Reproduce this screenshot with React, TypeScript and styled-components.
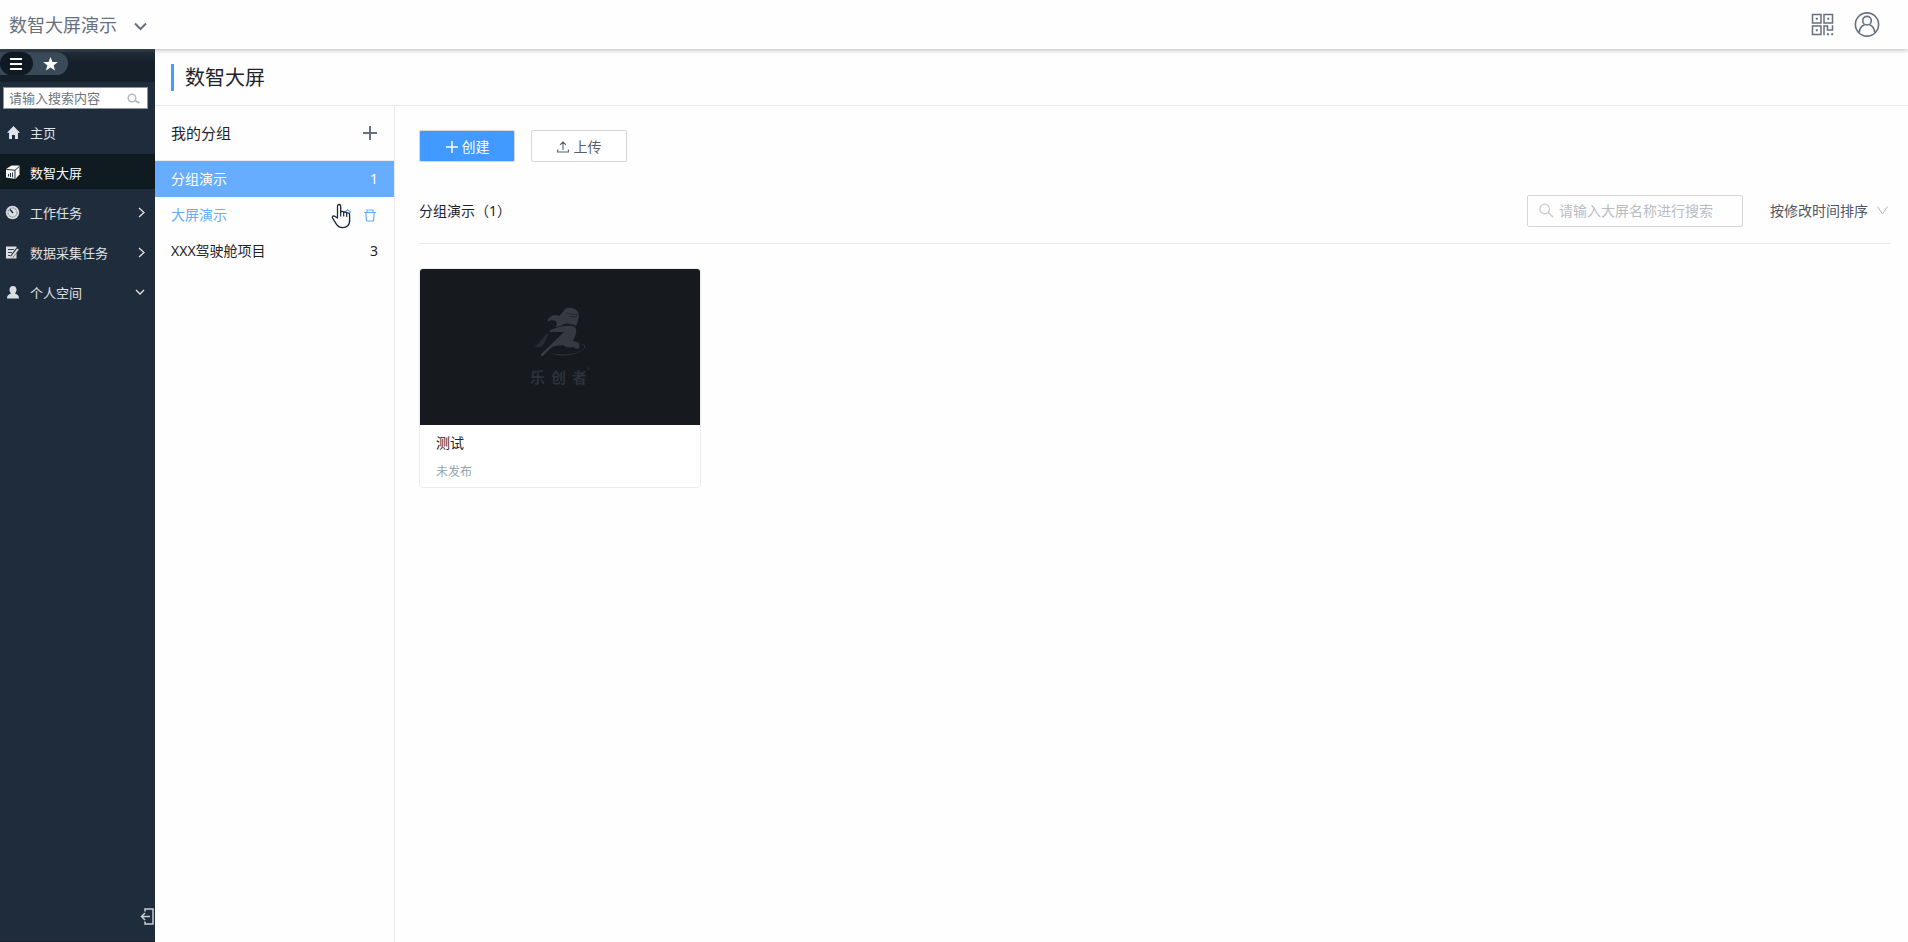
import React from "react";
import styled, { createGlobalStyle } from "styled-components";

const GlobalStyle = createGlobalStyle`
  *, *::before, *::after { box-sizing: border-box; }
  body {
    margin: 0;
    background: #fefefe;
    color: #1f2329;
    font-family: "Noto Sans", "Noto Sans CJK SC", sans-serif;
    font-size: 14px;
    line-height: 20px;
  }
  button, input, select { font: inherit; color: inherit; margin: 0; }
  button { background: none; border: 0; padding: 0; cursor: pointer; }
  h1, h2, h3, p, ul { margin: 0; padding: 0; font-weight: 400; }
  ul { list-style: none; }
  a { color: inherit; text-decoration: none; }
  svg { display: block; flex: none; }
`;

const Page = styled.div`
  display: flex;
  flex-direction: column;
  min-height: 100vh;
`;

const Header = styled.header`
  position: relative;
  z-index: 1;
  display: flex;
  align-items: center;
  justify-content: space-between;
  height: 49px;
  padding: 0 28px 0 9px;
  color: #66707f;
  box-shadow: 0 1px 5px rgba(0, 0, 0, 0.28);
  background: #fefefe;
`;

const AppSwitcher = styled.button`
  display: flex;
  align-items: center;
  gap: 17px;
  font-size: 18px;
  line-height: 24px;

  svg { margin-top: 3px; }
`;

const HeaderTools = styled.div`
  display: flex;
  align-items: center;
  gap: 20px;
`;

const Body = styled.div`
  display: flex;
  flex: 1;
`;

const Sidebar = styled.aside`
  display: flex;
  flex-direction: column;
  width: 155px;
  flex: none;
  background: #1e2c3c;
  border-bottom: 1px solid #17202c;
  color: #e6e8ea;
`;

const SidebarTop = styled.div`
  height: 33px;
  padding-top: 3px;
  background: linear-gradient(#41505c, #1f2c37 4px, #15202b 14px);
`;

const ModeSwitch = styled.div`
  display: flex;
  width: 68px;
  height: 23px;
  background: #3a4a58;
  border-radius: 0 12px 12px 0;
`;

const ModeButton = styled.button<{ $active?: boolean }>`
  display: flex;
  align-items: center;
  justify-content: center;
  width: ${(p) => (p.$active ? 33 : 35)}px;
  height: 23px;
  padding-right: ${(p) => (p.$active ? 2 : 0)}px;
  color: #fff;
  border-radius: 12px;
  background: ${(p) => (p.$active ? "#101a24" : "transparent")};
`;

const MenuSearch = styled.label`
  display: flex;
  align-items: center;
  height: 22px;
  margin: 5px 7px 5px 3px;
  padding: 0 7px 0 5px;
  background: #fff;
  border: 1px solid #8d949b;
  color: #b4b8c2;
`;

const BareInput = styled.input<{ $hint: string }>`
  flex: 1;
  min-width: 0;
  padding: 0;
  border: 0;
  outline: 0;
  background: transparent;
  color: #333;
  &::placeholder { color: ${(p) => p.$hint}; opacity: 1; }
`;

const MenuInput = styled(BareInput)`
  font-size: 13px;
  line-height: 20px;
`;

const Menu = styled.ul`
  display: flex;
  flex-direction: column;
  gap: 5px;
`;

const MenuLink = styled.a<{ $active?: boolean }>`
  display: flex;
  align-items: center;
  gap: 10px;
  height: 35px;
  padding: 2px 10px 0 5px;
  font-size: 13px;
  color: ${(p) => (p.$active ? "#fff" : "#e0e3e6")};
  background: ${(p) => (p.$active ? "#101a21" : "transparent")};
`;

const MenuText = styled.span`
  flex: 1;
  white-space: nowrap;
`;

const Collapse = styled.button`
  align-self: flex-end;
  margin: auto 0 16px;
  color: #c8ccd2;
`;

const Workspace = styled.div`
  display: flex;
  flex-direction: column;
  flex: 1;
  min-width: 0;
`;

const TitleBar = styled.div`
  display: flex;
  align-items: center;
  gap: 11px;
  height: 57px;
  padding: 0 16px;
  border-bottom: 1px solid #e9eaec;
  &::before { content: ""; width: 3px; height: 27px; background: #409eff; }
`;

const Title = styled.h1`
  padding-top: 2px;
  font-size: 20px;
  line-height: 28px;
`;

const Columns = styled.div`
  display: flex;
  flex: 1;
`;

const GroupPanel = styled.nav`
  width: 240px;
  flex: none;
  border-right: 1px solid #e9eaec;
`;

const GroupHeader = styled.div`
  display: flex;
  align-items: center;
  justify-content: space-between;
  height: 55px;
  padding: 0 17px 0 16px;
  border-bottom: 1px solid #e9eaec;
  color: #66707f;
`;

const GroupHeading = styled.h2`
  font-size: 15px;
  color: #1f2329;
`;

const GroupRow = styled.li<{ $tone?: "active" | "hover" }>`
  display: flex;
  align-items: center;
  justify-content: space-between;
  height: 36px;
  padding: 0 16px;
  background: ${(p) => (p.$tone === "active" ? "#66adff" : "transparent")};
  color: ${(p) =>
    p.$tone === "active" ? "#fff" : p.$tone === "hover" ? "#66adff" : "#1f2329"};
`;

const RowTools = styled.div`
  position: relative;
  display: flex;
  align-items: center;
  gap: 13px;
  padding-right: 2px;
`;

const Pointer = styled.svg`
  position: absolute;
  left: -7px;
  top: -5px;
  pointer-events: none;
`;

const Main = styled.main`
  flex: 1;
  min-width: 0;
  padding: 24px 17px 24px 24px;
`;

const Actions = styled.div`
  display: flex;
  align-items: center;
  gap: 16px;
  height: 32px;
`;

const ActionButton = styled.button<{ $primary?: boolean }>`
  display: flex;
  align-items: center;
  justify-content: center;
  gap: ${(p) => (p.$primary ? 3 : 5)}px;
  width: 96px;
  height: 32px;
  padding-top: 1px;
  border: 1px solid #d4d6da;
  border-radius: 2px;
  background: ${(p) => (p.$primary ? "#409aff" : "#fff")};
  color: ${(p) => (p.$primary ? "#fff" : "#595f69")};
`;

const ListBar = styled.div`
  display: flex;
  align-items: center;
  gap: 27px;
  height: 82px;
  padding-top: 16px;
  border-bottom: 1px solid #e9eaec;
`;

const ListHeading = styled.h2`
  flex: 1;
  font-size: 14px;
`;

const BoardSearch = styled.label`
  display: flex;
  align-items: center;
  gap: 5px;
  width: 216px;
  height: 32px;
  padding: 0 11px;
  border: 1px solid #d4d6da;
  border-radius: 2px;
  color: #c5c8ce;
`;

const SortBox = styled.label`
  display: flex;
  align-items: center;
  gap: 9px;
  padding-right: 3px;
  color: #b4b8bf;
`;

const SortSelect = styled.select`
  appearance: none;
  width: 98px;
  padding: 0;
  border: 0;
  background: transparent;
  color: #505762;
`;

const Cards = styled.div`
  display: flex;
  flex-wrap: wrap;
  gap: 24px;
  padding-top: 24px;
`;

const Card = styled.article`
  width: 282px;
  border: 1px solid #ebecef;
  border-radius: 4px;
  overflow: hidden;
  background: #fff;
`;

const Cover = styled.div`
  display: flex;
  flex-direction: column;
  align-items: center;
  gap: 11px;
  height: 156px;
  padding-top: 38px;
  background: #16191d;
  color: #363940;
`;

const Brand = styled.div`
  display: flex;
  gap: 6px;
  font-family: "Noto Sans CJK SC", sans-serif;
  font-size: 15px;
  font-weight: 700;
  line-height: 18px;
  color: #2b3239;
`;

const Registered = styled.sup`
  margin-left: -6px;
  font-size: 6px;
  line-height: 6px;
`;

const CardInfo = styled.div`
  display: flex;
  flex-direction: column;
  gap: 9px;
  padding: 8px 16px 5px;
`;

const CardStatus = styled.p`
  font-size: 12px;
  color: #94a3b0;
`;

const CardTitle = styled.h3`
  font-size: 14px;
`;

type StrokeProps = { w: number; h: number; d: string; sw?: number };
const Line = ({ w, h, d, sw = 1 }: StrokeProps) => (
  <svg width={w} height={h} viewBox={`0 0 ${w} ${h}`} fill="none" stroke="currentColor" strokeWidth={sw} aria-hidden="true">
    <path d={d} />
  </svg>
);

const QrIcon = () => (
  <svg width="23" height="23" viewBox="0 0 23 23" fill="none" stroke="currentColor" strokeWidth="1.5" aria-hidden="true">
    <path d="M1.500 1.500h8.500v8.500H1.500zM13 1.500h8.500v8.500H13zM1.500 13h8.500v8.500H1.500zM13 22.300v-9.300h3.500v4h5v-4.700" />
    <path d="M4.800 5.800h2M16.300 5.800h2M4.800 17.300h2M16 21.300h2M20.200 21.300h2" strokeWidth="2" />
  </svg>
);

const UserIcon = () => (
  <svg width="26" height="26" viewBox="0 0 26 26" fill="none" stroke="currentColor" strokeWidth="1.6" aria-hidden="true">
    <circle cx="13" cy="12.500" r="11.600" />
    <circle cx="13" cy="8.700" r="4.300" />
    <path d="M5.200 20.700c.3-4 2.300-6.700 5.300-7.900M20.800 20.700c-.3-4-2.300-6.700-5.300-7.900" />
  </svg>
);

const HomeIcon = () => (
  <svg width="15" height="15" viewBox="0 0 15 15" fill="currentColor" aria-hidden="true">
    <path d="M8.500 1 15 7.800h-2V14h-3v-4H7v4H4V7.800H2z" />
  </svg>
);

const CubeIcon = () => (
  <svg width="15" height="15" viewBox="0 0 15 15" aria-hidden="true">
    <path d="M1 4 6.500.5h8v9L10.500 14 1 12.500z" fill="#f5f5f5" />
    <path d="M1 4.300l9 1 4.500-4M10 5.300V14M3.500 11.500v-2.500M5.500 12V8M7.600 12.400V7.500" stroke="#26323c" strokeWidth="1" fill="none" />
  </svg>
);

const ClockIcon = () => (
  <svg width="15" height="15" viewBox="0 0 15 15" aria-hidden="true">
    <circle cx="7.500" cy="7.500" r="6.700" fill="#dcdfe2" />
    <circle cx="7.500" cy="7.500" r="4.600" fill="none" stroke="#4a5662" strokeWidth=".8" strokeDasharray="2 1" />
    <path d="M5 4.500 8 8" stroke="#1e2c3c" strokeWidth="1.500" />
  </svg>
);

const FormIcon = () => (
  <svg width="15" height="15" viewBox="0 0 15 15" aria-hidden="true">
    <path d="M1 1.500h10.500v12H1z" fill="#dcdfe2" />
    <path d="M3 4.500h6M3 7.500h4M3 10.500h2" stroke="#34414f" />
    <path d="m6.500 12 6-8" stroke="#1e2c3c" strokeWidth="3.400" />
    <path d="m6.500 12.500 6.500-8.500" stroke="#dcdfe2" strokeWidth="2" />
  </svg>
);

const PersonIcon = () => (
  <svg width="15" height="15" viewBox="0 0 15 15" fill="#dcdfe2" aria-hidden="true">
    <path d="M8 1c2.200 0 3.500 1.500 3.500 3.600 0 1.600-.6 2.900-1.500 3.800 2.500.9 4 2 4 5.100H2c0-3.100 1.500-4.200 4-5.100-.9-.9-1.500-2.200-1.500-3.800C4.500 2.500 5.800 1 8 1z" />
  </svg>
);

const HandPointer = () => (
  <Pointer width="21" height="26" viewBox="0 0 21 26" aria-hidden="true">
    <path
      d="M6.500 15V3.200C6.500.9 9.700.9 9.700 3.200v6c.3-1.300 2.900-1 3 .5.600-1.200 2.800-.9 3 .7.800-1 2.900-.5 2.900 1.300v5.500c0 4.500-2.600 7.400-7 7.400-3.400 0-5.100-1.500-6.700-4.200l-3.300-5.200c-1-1.900 1.200-3 2.500-1.700z"
      fill="#fff" stroke="#1c2533" strokeWidth="1.300" strokeLinejoin="round"
    />
    <path d="M9.700 9v4.500M12.700 10v3.500M15.700 11v3" stroke="#1c2533" strokeWidth="1.200" />
  </Pointer>
);

const RunnerLogo = () => (
  <svg width="54" height="50" viewBox="0 0 54 50" fill="currentColor" aria-hidden="true">
    <path d="M30 5c1-4 5-5 9-4 5 1 7 4 7 8-1 3-1 7-3 10-2-1-4-2-7-2-3-1-6 0-8 2l-6 1c2-2 2-3 1-6-3-1-6-1-9 1 1-4 4-7 9-7l3 1 4-4z" />
    <path d="M17 23c8-3 15-5 22-4 4 1 5 4 4 7-1 4-2 6-3 8l4 1c3 1 3 3 2 6-2 2-4 0-6-1-5 1-8 0-10-2-4 1-8 0-12 3l-8 8c-2 0-3-2-1-3L29 27l2-2-14 0z" />
    <path d="M1 39c4-1 5-4 8-7l7-8c-2 7-4 13-8 16-3 1-5 0-7-1z" opacity=".55" />
    <path d="M18 46c13 3 27 1 32-4 2-2 1-4-2-5 7 0 4 6-2 8-8 4-19 5-28 1z" opacity=".8" />
    <path d="M34 6c4 1 8 2 12 1M36 9c4 1 6 1 9 0" stroke="#202329" strokeWidth=".7" fill="none" />
  </svg>
);

const RIGHT = { w: 7, h: 11, d: "M1 1l5 4.500-5 4.500" };
const DOWN = { w: 10, h: 7, d: "M1 1l4 4 4-4" };

const menuItems = [
  { label: "主页", icon: <HomeIcon /> },
  { label: "数智大屏", icon: <CubeIcon />, active: true },
  { label: "工作任务", icon: <ClockIcon />, arrow: RIGHT },
  { label: "数据采集任务", icon: <FormIcon />, arrow: RIGHT },
  { label: "个人空间", icon: <PersonIcon />, arrow: DOWN },
];

export default function App() {
  return (
    <Page>
      <GlobalStyle />
      <Header>
        <AppSwitcher type="button">
          数智大屏演示
          <Line w={13} h={9} sw={2} d="M1 1.500l5.500 5.500L12 1.500" />
        </AppSwitcher>
        <HeaderTools>
          <button type="button" aria-label="二维码"><QrIcon /></button>
          <button type="button" aria-label="用户"><UserIcon /></button>
        </HeaderTools>
      </Header>
      <Body>
        <Sidebar>
          <SidebarTop>
            <ModeSwitch>
              <ModeButton $active type="button" aria-label="菜单">
                <Line w={12} h={12} sw={2} d="M0 1h12M0 6h12M0 11h12" />
              </ModeButton>
              <ModeButton type="button" aria-label="收藏">
                <svg width="15" height="14" viewBox="0 0 15 14" fill="currentColor" aria-hidden="true">
                  <path d="m7.500 0 1.900 4.900 5.400.2-4.200 3.300 1.500 5.100-4.600-2.900-4.600 2.900 1.500-5.100L.2 5.100l5.400-.2z" />
                </svg>
              </ModeButton>
            </ModeSwitch>
          </SidebarTop>
          <MenuSearch>
            <MenuInput $hint="#70757b" type="text" placeholder="请输入搜索内容" aria-label="请输入搜索内容" />
            <svg width="13" height="11" viewBox="0 0 13 11" fill="none" stroke="currentColor" aria-hidden="true">
              <circle cx="5" cy="5" r="3.800" strokeWidth="1.500" />
              <path d="m8 7.500 4.500 2.500" strokeWidth="2" />
            </svg>
          </MenuSearch>
          <Menu>
            {menuItems.map((m) => (
              <li key={m.label}>
                <MenuLink href="#" $active={m.active}>
                  {m.icon}
                  <MenuText>{m.label}</MenuText>
                  {m.arrow && <Line {...m.arrow} sw={1.3} />}
                </MenuLink>
              </li>
            ))}
          </Menu>
          <Collapse type="button" aria-label="收起">
            <Line w={15} h={17} sw={1.5} d="M5 3.500V1h8v15H5v-2.500M10 8.500H1M5 5 1.500 8.500 5 12" />
          </Collapse>
        </Sidebar>
        <Workspace>
          <TitleBar><Title>数智大屏</Title></TitleBar>
          <Columns>
            <GroupPanel>
              <GroupHeader>
                <GroupHeading>我的分组</GroupHeading>
                <button type="button" aria-label="新建分组">
                  <Line w={14} h={14} sw={2} d="M7 0v14M0 7h14" />
                </button>
              </GroupHeader>
              <ul>
                <GroupRow $tone="active"><span>分组演示</span><span>1</span></GroupRow>
                <GroupRow $tone="hover">
                  <span>大屏演示</span>
                  <RowTools>
                    <button type="button" aria-label="编辑">
                      <Line w={13} h={14} sw={1.2} d="M2 10l7.500-8.500L12.500 4l-7.500 8H2zM8 13h5" />
                    </button>
                    <button type="button" aria-label="删除">
                      <Line w={12} h={13} sw={1.2} d="M0 3.500h12M3 3.500V1h6v2.500M1.800 3.500 2.500 12h7l.7-8.500" />
                    </button>
                    <HandPointer />
                  </RowTools>
                </GroupRow>
                <GroupRow><span>XXX驾驶舱项目</span><span>3</span></GroupRow>
              </ul>
            </GroupPanel>
            <Main>
              <Actions>
                <ActionButton $primary type="button">
                  <Line w={14} h={14} sw={1.5} d="M7 1v12M1 7h12" />创建
                </ActionButton>
                <ActionButton type="button">
                  <Line w={12} h={12} sw={1.1} d="M6 9V1M3 3.800 6 1l3 2.800M.6 8.500V11h10.800V8.500" />上传
                </ActionButton>
              </Actions>
              <ListBar>
                <ListHeading>分组演示（1）</ListHeading>
                <BoardSearch>
                  <Line w={15} h={15} sw={1.2} d="M10.500 6a4.800 4.800 0 1 1-9.600 0 4.800 4.800 0 0 1 9.600 0zM9.200 9.500l5 4.700" />
                  <BareInput $hint="#b9bcc2" type="text" placeholder="请输入大屏名称进行搜索" aria-label="请输入大屏名称进行搜索" />
                </BoardSearch>
                <SortBox>
                  <SortSelect aria-label="排序方式"><option>按修改时间排序</option></SortSelect>
                  <Line w={11} h={9} d="M.5.500l5 7.500 5-7.500" />
                </SortBox>
              </ListBar>
              <Cards>
                <Card>
                  <Cover>
                    <RunnerLogo />
                    <Brand>
                      <span>乐</span><span>创</span><span>者</span><Registered>®</Registered>
                    </Brand>
                  </Cover>
                  <CardInfo>
                    <CardTitle>测试</CardTitle>
                    <CardStatus>未发布</CardStatus>
                  </CardInfo>
                </Card>
              </Cards>
            </Main>
          </Columns>
        </Workspace>
      </Body>
    </Page>
  );
}
